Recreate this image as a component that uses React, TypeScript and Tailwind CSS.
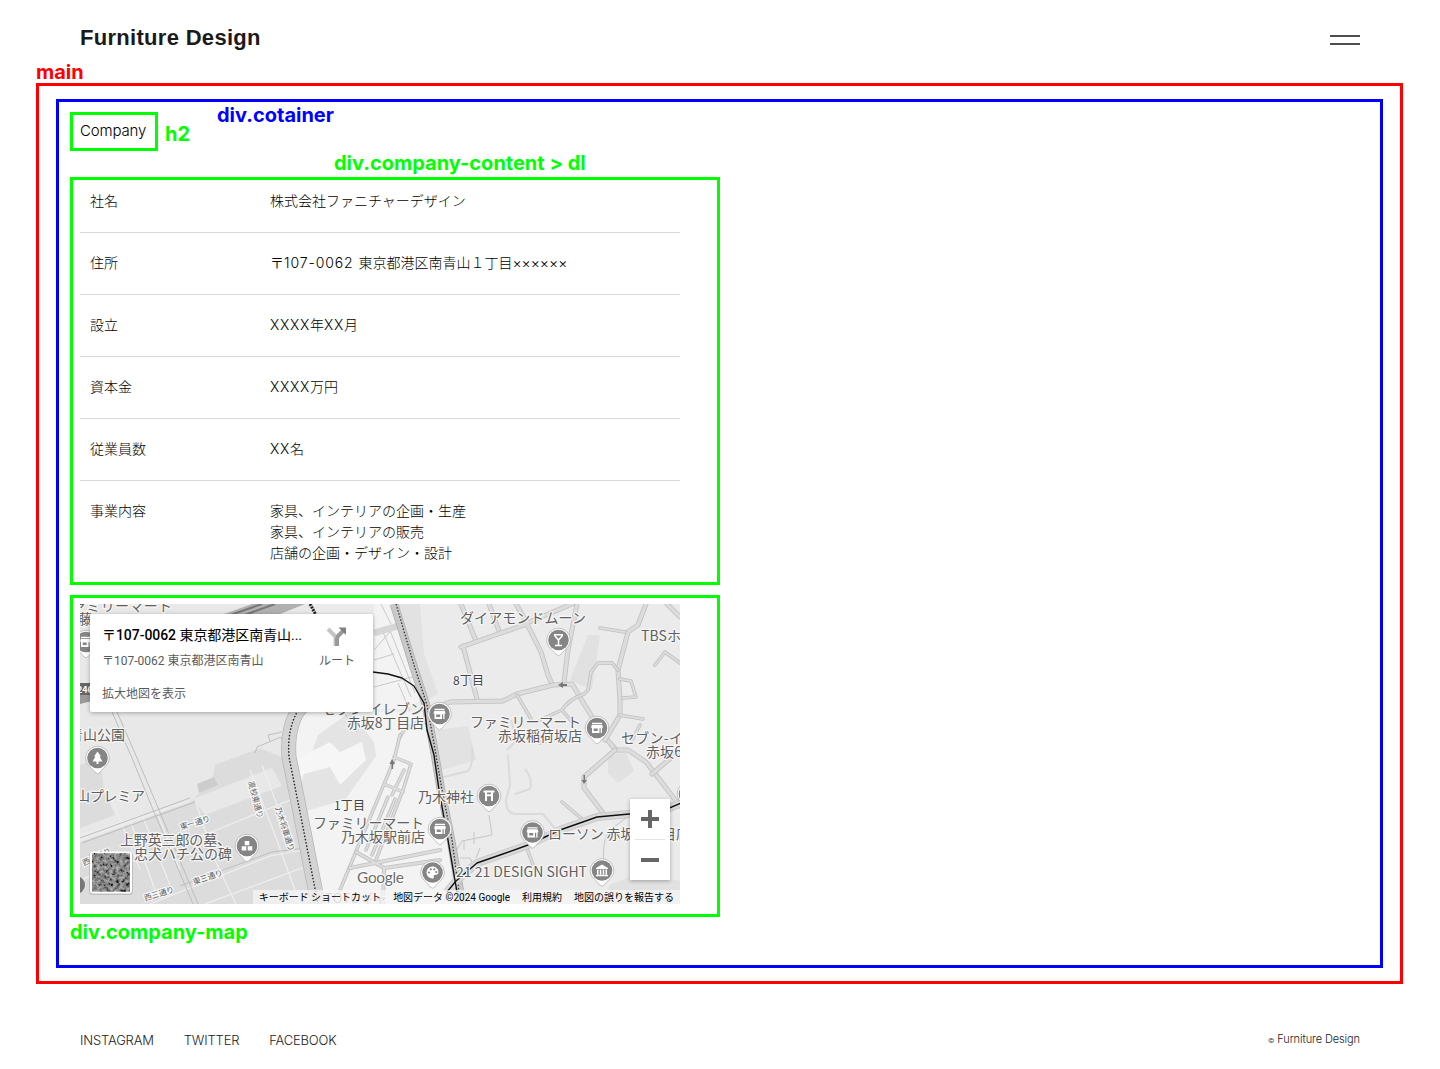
import React from "react";

const JP = "font-['Noto_Sans_CJK_JP',sans-serif]";
const BODY = "font-[Inter,'Noto_Sans_CJK_JP',sans-serif]";

const rows: { term: string; lines: React.ReactNode[] }[] = [
  { term: "社名", lines: ["株式会社ファニチャーデザイン"] },
  { term: "住所", lines: [<>〒<span className="tracking-[0.9px]">107-0062 </span>東京都港区南青山１丁目××××××</>] },
  { term: "設立", lines: [<><span className="tracking-[0.75px]">XXXX</span>年<span className="tracking-[0.75px]">XX</span>月</>] },
  { term: "資本金", lines: [<><span className="tracking-[0.75px]">XXXX</span>万円</>] },
  { term: "従業員数", lines: [<><span className="tracking-[0.75px]">XX</span>名</>] },
  { term: "事業内容", lines: ["家具、インテリアの企画・生産", "家具、インテリアの販売", "店舗の企画・デザイン・設計"] },
];

const minorRoads = [
  "M461 604 L476 641 M489 604 L499 631",
  "M461 647 L527 624 L541 652 L548 675 L552 684 M463 646 L477 699 M516 604 L527 623 L572 604 M577 604 L568 650 L564 682",
  "M433 708 L450 702 L503 701 L517 694 L553 685 L572 684 L603 735 L616 750 L628 750 L646 762 L680 806",
  "M646 604 L638 625 L628 632 L618 670 L620 700 L620 715 L605 740",
  "M615 750 L584 777 L584 788 L603 813 M652 774 L680 750 M667 604 L680 617",
];

const lanes = [
  "M517 695 L531 719 M540 743 L548 740 M540 720 L562 710 L572 722 M562 710 Q568 700 584 694 L588 690 L591 672 L598 663 L612 663 L618 670",
  "M600 628 L625 632 M620 679 L631 681 L636 697 L623 698 M619 715 L643 719 M640 725 L632 740 M655 665 L665 652 L680 663",
  "M562 802 L582 819 M526 846 L535 870",
];

const streets = [
  "M112 800 L140 870 M130 820 L155 890 M143 817 L170 885 M158 815 L180 870",
  "M196 803 L215 860 L236 904 M250 770 L275 835 L300 904 M262 765 L290 840",
  "M80 880 L180 845 L290 800 M150 904 L270 856 L303 850 M205 904 L310 865",
];

const darkRail = "M373 672 L388 674 L402 678 L414 686 L424 703 L427 730 L434 755 L439 790 L448 840 L457 892";
const eastRail = "M447 892 L456 881 L477 863 L500 855 L528 845 L560 830 L597 817 L640 813 L667 809 L681 803";
const westCurve = "M320 690 Q301 705 296 714 Q287 732 289 757 L300 812 L310 863 L318 904";
const avenue = "M393 604 L412 665 L425 705 L434 755 L440 790 L450 840 L461 904";

function Road({ d, w = 4 }: { d: string; w?: number }) {
  return (
    <g fill="none" strokeLinejoin="round" strokeLinecap="round">
      <path d={d} stroke="#c0c0c0" strokeWidth={w} />
      <path d={d} stroke="#dcdcdc" strokeWidth={w - 1.6} />
    </g>
  );
}

function Label({ x, y, w, size = 14, rotate = 0, fill = "#606060", children }: {
  x: number; y: number; w: number; size?: number; rotate?: number; fill?: string; children: string;
}) {
  return (
    <text
      x={x}
      y={y}
      textLength={w}
      fontSize={size}
      fill={fill}
      stroke="#f6f6f6"
      strokeWidth={2.5}
      strokeLinejoin="round"
      paintOrder="stroke"
      transform={rotate ? `rotate(${rotate} ${x} ${y})` : undefined}
    >
      {children}
    </text>
  );
}

type Kind = "shop" | "bar" | "tree" | "shrine" | "museum" | "palette" | "blocks" | "none";

function Glyph({ kind }: { kind: Kind }) {
  if (kind === "shop")
    return (
      <g>
        <path d="M-5-5.300H5v1.300H-5zM-5.200-3.200H5.200L6-.3H5V5H-5V-.3h-1z" fill="#fff" />
        <path d="M-3.300.5h4v2.500h-4zM2.500.3h1.200V5H2.500z" fill="#858585" />
      </g>
    );
  if (kind === "bar") return <path d="M-4.500-5.300h9M-4-4.500 0 0 4-4.500M0 0v5M-3.500 5.500h7" fill="none" stroke="#fff" strokeWidth={1.5} />;
  if (kind === "tree") return <path d="M0-6.500 3.500-1.500H2L5 3.500H1V6h-2V3.500h-4L-2-1.500h-1.500z" fill="#fff" />;
  if (kind === "shrine") return <path d="M-5.500-4.500h11M-4-.8h8M-3-4v9M3-4v9" fill="none" stroke="#fff" strokeWidth={2} />;
  if (kind === "museum") return <path d="M-6-2.500 0-6 6-2.500v1H-6zM-5-1h1.500v5H-5zM-2.200-1h1.500v5h-1.500zM.7-1h1.500v5H.7zM3.500-1H5v5H3.500zM-6 4.200H6v1.500H-6z" fill="#fff" />;
  if (kind === "palette")
    return (
      <g>
        <path d="M0-6a6 6 0 1 0 0 12c2 0 1-2 1.300-3 .3-1.200 4.700.2 4.700-3.500C6-3.500 3.500-6 0-6z" fill="#fff" />
        <g fill="#858585">
          <circle cx={-3.5} cy={0} r={1.1} />
          <circle cx={-1.7} cy={-3.2} r={1.1} />
          <circle cx={1.8} cy={-3.2} r={1.1} />
          <circle cx={3.8} cy={-0.5} r={1.1} />
        </g>
      </g>
    );
  if (kind === "blocks") return <path d="M-2.300-5h4.600v4.300h-4.600zM-5.300.3h4.600v4.300h-4.600zM.7.3h4.600v4.300H.7z" fill="#fff" />;
  return null;
}

function Pin({ x, y, kind }: { x: number; y: number; kind: Kind }) {
  return (
    <g transform={`translate(${x} ${y})`}>
      <path
        d="M0-11.800a11.800 11.800 0 0 1 11.800 11.800c0 6.500-5.500 9-9.300 14.300q-2.500 3-5 0C-6.300 9-11.800 6.500-11.800 0A11.800 11.800 0 0 1 0-11.800z"
        fill="#fff"
        stroke="#aaa"
        strokeOpacity={0.7}
        strokeWidth={1}
      />
      <circle r={10.3} fill="#858585" />
      <Glyph kind={kind} />
    </g>
  );
}

function MapDrawing() {
  return (
    <svg viewBox="80 604 600 300" className={`block h-[300px] w-[600px] font-normal ${JP}`}>
      <defs>
        <filter id="aerial" x="0" y="0" width="100%" height="100%">
          <feTurbulence type="fractalNoise" baseFrequency="0.3" numOctaves={4} seed={7} />
          <feColorMatrix values="1.6 0 0 0 -.4  1.6 0 0 0 -.4  1.6 0 0 0 -.4  0 0 0 0 1" />
        </filter>
      </defs>
      <rect x={80} y={604} width={600} height={300} fill="#ebebeb" />
      <path d="M80 604h230l50 110-60 30-10 25-210 65z" fill="#e8e8e8" />
      <path d="M80 765 L100 757 L104 790 L115 815 L80 828z" fill="#dcdcdc" />
      <path d="M80 842 L190 802 L212 782 L215 765 L260 748 L288 760 L302 812 L318 904 H80z" fill="#dcdcdc" />
      <path d="M193 799 L272 768 L282 786 L205 815z" fill="#e8e8e8" />
      <path d="M197 784 L214 777 L218 785 L199 793z" fill="#cdcdcd" />
      <path d="M300 712h125l12 60 18 132H318l-18-100-6-50z M374 604h22l28 95-20 10h-30z" fill="#f3f3f3" />
      <path d="M302 780 L318 735 L350 712 L374 742 L376 756 L345 800 L302 812z" fill="#e4e4e4" />
      <path d="M298 758 L330 742 L340 752 L362 742 L366 760 L340 785 L330 767 L300 775z" fill="#f6f6f6" />
      <path d="M396 604h24l4 50 14 40-14 8z M436 730l32-4 8 34-34 10z" fill="#e2e2e2" />
      <path d="M588 635l12 0-8 55-22-10z M608 755l18-2 8 18-16 12-10-10z M610 885l30-12 40 8v24H600z" fill="#e1e1e1" />

      <path d="M213 618 L252 604 H305 L270 618z" fill="#b0b0b0" />
      <path d="M222 618 L262 604 M236 618 L275 604" stroke="#777" strokeWidth={2} />
      <path d="M80 687 L96 680 V700 L80 704z" fill="#9a9a9a" />
      <path
        d="M312 604l4 12M374 634l22-7M374 650l22-25M383 632l28 65M389 628l26 65M374 687l38-10M374 660l20-6M381 604l10 20M398 683l12 28"
        fill="none"
        stroke="#c9c9c9"
      />
      <path d="M374 633l24-7" stroke="#d6d6d6" strokeWidth={7} />

      <g fill="none" strokeLinejoin="round">
        {streets.map((d) => (
          <path key={d} d={d} stroke="#efefef" strokeWidth={1.2} />
        ))}
        <path d="M80 838 L190 798 M82 843 L195 802 M112 712 L132 758 L154 812 L193 904 M117 712 L137 758 L159 810 L198 904" stroke="#bdbdbd" />
        <path d="M180 886 L272 852 L306 848 M255 753 L257 747 L281 737 L284 748 M270 741 L268 735 L282 732" stroke="#c0c0c0" />
      </g>

      {minorRoads.map((d) => (
        <Road key={d} d={d} w={5} />
      ))}
      {lanes.map((d) => (
        <Road key={d} d={d} w={3.5} />
      ))}
      <g fill="none" stroke="#dadada" strokeWidth={2}>
        <path d="M508 755l2 30-4 15q0 15 12 14h25l15 18 M525 769q8 10 5 20l-15 5 M440 778l28-7q6-8 4-24 M511 720l6 20-10 10" />
      </g>
      <g fill="none" stroke="#c6c6c6" strokeWidth={1}>
        <path d="M489 815l3 20-30 6-6 10M464 840v10M474 832v12M630 815l-20 15q-10 10-5 50M460 858l10 0 3 6M480 848l-4 10" />
        <path d="M412 727l18-5 M345 714l12 18" />
      </g>
      <Road d="M400 737 L404 730 L430 715" w={3.5} />
      <Road d="M400 735 L394 760 L340 890 M394 757 L411 764 L403 790 L376 860 M384 784 L403 792 M404 770 L392 795 M388 797 L366 850 M395 799 L372 855" w={3.5} />
      <Road d="M356 852 L384 868 L440 860 M384 868 L383 904 M350 868 L440 850" w={4} />

      <g fill="none" strokeLinejoin="round">
        <path d={westCurve} stroke="#b6b6b6" strokeWidth={15} />
        <path d={westCurve} stroke="#d3d3d3" strokeWidth={13.5} />
        <path d={westCurve} stroke="#222" strokeWidth={1.4} strokeDasharray="1.5 1.8" />
        <path d={avenue} stroke="#adadad" strokeWidth={8.5} transform="translate(1 0)" />
        <path d={avenue} stroke="#c8c8c8" strokeWidth={7} transform="translate(1 0)" />
        <path d="M396 604 L414 665 L427 705 L436 755 L442 790 L452 840 L459 892" stroke="#333" strokeWidth={1.3} strokeDasharray="1.500 1.700" />
        <path d={eastRail} stroke="#c3c3c3" strokeWidth={8} />
        <path d={eastRail} stroke="#d9d9d9" strokeWidth={6.5} />
        <path d={darkRail} stroke="#111" strokeWidth={1.4} />
        <path d={eastRail} stroke="#111" strokeWidth={1.4} />
      </g>
      <path d="M558 685l5-3v2h4v2h-4v2zM584 784l-2.500-4h2v-5h1.500v5h2zM392 759l-2.500 5h2v5h1.500v-5h2z" fill="#777" />
      <path d="M310 604l6 11" stroke="#222" strokeWidth={3} strokeDasharray="2 1" />

      <Label x={72} y={611} w={100}>ァミリーマート</Label>
      <Label x={78} y={624} w={14}>藤</Label>
      <Pin x={86} y={642} kind="shop" />
      <rect x={74} y={683} width={24} height={12} rx={5} fill="#666" />
      <text x={77} y={693} fontSize={9} fontWeight={700} fill="#fff">246</text>
      <Label x={460} y={622.5} w={126}>ダイアモンドムーン</Label>
      <Label x={641} y={641} w={40}>TBSホ</Label>
      <Label x={453} y={685} w={31} size={12} fill="#444">8丁目</Label>
      <Label x={322} y={714} w={102}>セブン-イレブン</Label>
      <Label x={347} y={728} w={77}>赤坂8丁目店</Label>
      <Label x={470} y={727} w={111}>ファミリーマート</Label>
      <Label x={498} y={741} w={84}>赤坂稲荷坂店</Label>
      <Label x={621} y={742.5} w={62}>セブン-イ</Label>
      <Label x={646} y={756.5} w={36}>赤坂6</Label>
      <Label x={69} y={740} w={56}>青山公園</Label>
      <Label x={76} y={801} w={69}>山プレミア</Label>
      <Label x={334} y={810} w={31} size={12} fill="#444">1丁目</Label>
      <Label x={313} y={828} w={111}>ファミリーマート</Label>
      <Label x={341} y={842} w={84}>乃木坂駅前店</Label>
      <Label x={418} y={802} w={56}>乃木神社</Label>
      <Label x={548} y={839} w={142}>ローソン 赤坂六丁目店</Label>
      <Label x={456} y={877} w={131}>21 21 DESIGN SIGHT</Label>
      <Label x={120} y={845} w={111}>上野英三郎の墓、</Label>
      <Label x={134} y={859} w={98}>忠犬ハチ公の碑</Label>
      <Label x={181} y={830} w={31} size={8} rotate={-17}>東一通り</Label>
      <Label x={84} y={866} w={31} size={8} rotate={-25}>西二通り</Label>
      <Label x={145} y={901} w={31} size={8} rotate={-17}>西三通り</Label>
      <Label x={194} y={885} w={31} size={8} rotate={-19}>東三通り</Label>
      <Label x={248} y={782} w={38} size={8} rotate={75}>高校東通り</Label>
      <Label x={275} y={808} w={46} size={8} rotate={72}>乃木将軍通り</Label>
      <Label x={325} y={903} w={62} size={13} fill="#8a8a8a">TOTOギャ</Label>

      <Pin x={558.5} y={640} kind="bar" />
      <Pin x={439.5} y={714} kind="shop" />
      <Pin x={597} y={728} kind="shop" />
      <Pin x={97.5} y={758} kind="tree" />
      <Pin x={489} y={796} kind="shrine" />
      <Pin x={440} y={829} kind="shop" />
      <Pin x={532.5} y={832.5} kind="shop" />
      <Pin x={432.5} y={872.5} kind="palette" />
      <Pin x={602} y={870.5} kind="museum" />
      <Pin x={247} y={846} kind="blocks" />
      <Pin x={689} y={794} kind="none" />
      <circle cx={76} cy={885} r={9} fill="#777" />

      <text x={357} y={883} textLength={47} fontSize={15.5} fill="#6b6b6b" stroke="#fff" strokeWidth={2} paintOrder="stroke" className="font-[Lato]">Google</text>
      <rect x={89} y={852} width={44} height={43} rx={4} fill="#888" opacity={0.35} />
      <rect x={90} y={851.5} width={42} height={42} rx={3} fill="#fff" />
      <rect x={92} y={853.5} width={38} height={38} rx={1} filter="url(#aerial)" />
      <rect x={92} y={853.5} width={38} height={38} fill="#444" opacity={0.35} />
    </svg>
  );
}

function CompanyMap() {
  return (
    <div className="relative h-[300px] w-[600px] overflow-hidden">
      <MapDrawing />
      <div className="absolute left-[10px] top-[10px] flex h-[98px] w-[283px] justify-between rounded-[2px] bg-white pl-3 shadow-[0_1px_4px_rgba(0,0,0,0.3)]">
        <div className="flex flex-col whitespace-nowrap font-[Roboto,'Noto_Sans_CJK_JP',sans-serif] text-[12px] text-[#5b5b5b]">
          <p className="mt-[11px] h-5 text-[14px] font-medium leading-5 tracking-[-0.05px] text-black"><span className="font-normal">〒</span>107-0062 <span className="font-normal">東京都港区南青山...</span></p>
          <p className="mt-[8px] h-4 font-normal leading-4">〒107-0062 東京都港区南青山</p>
          <p className="mt-[17px] h-4 font-normal leading-4">拡大地図を表示</p>
        </div>
        <div className="mr-[18px] flex w-9 flex-col items-center pt-3">
          <svg viewBox="0 0 22 22" className="size-[22px]">
            <path d="M2 3l7.500 7.500V20" fill="none" stroke="#c4c4c4" strokeWidth={4} />
            <path d="M11 20v-7q0-2 1.500-3.500L17 5" fill="none" stroke="#999" strokeWidth={4} />
            <path d="M12.500 1.500H20V9z" fill="#808080" />
          </svg>
          <span className={`mt-1 whitespace-nowrap text-[12px] font-normal leading-4 text-[#5b5b5b] ${JP}`}>ルート</span>
        </div>
      </div>
      <div className="absolute left-[550px] top-[195px] flex h-[81px] w-10 flex-col items-center bg-white shadow-[0_1px_4px_rgba(0,0,0,0.3)]">
        <svg viewBox="0 0 18 18" className="my-[11px] size-[18px]"><path d="M0 9h18M9 0v18" stroke="#666" strokeWidth={4} /></svg>
        <div className="h-px w-[30px] shrink-0 bg-[#e3e3e3]" />
        <svg viewBox="0 0 18 18" className="my-[11px] size-[18px]"><path d="M0 9h18" stroke="#666" strokeWidth={4} /></svg>
      </div>
      <div className="absolute bottom-0 right-0 flex h-[14px] items-center gap-3 whitespace-nowrap bg-[#f5f5f5]/75 px-[6px] pt-[2px] font-[Roboto,'Noto_Sans_CJK_JP',sans-serif] text-[10px] font-normal leading-[14px] text-black">
        <span>キーボード ショートカット</span>
        <span>地図データ ©2024 Google</span>
        <span>利用規約</span>
        <span>地図の誤りを報告する</span>
      </div>
    </div>
  );
}

function Tag({ className, children }: { className: string; children: string }) {
  return <span className={`absolute whitespace-nowrap font-[Inter,sans-serif] text-[20px] font-bold leading-6 ${className}`}>{children}</span>;
}

export default function App() {
  return (
    <div className={`flex h-[1069px] w-[1440px] flex-col overflow-hidden bg-white text-[14px] font-light text-black ${BODY}`}>
      <header className="flex h-[83px] shrink-0 justify-between px-20">
        <h1 className="pt-[25px] font-['Liberation_Sans',sans-serif] text-[22px] font-bold leading-[26px] tracking-[0.3px] text-[#1a1a1a]">Furniture Design</h1>
        <div className="flex w-[30px] flex-col gap-[6px] pt-[35px]">
          <div className="h-[2px] bg-[#4d4d4d]" />
          <div className="h-[2px] bg-[#4d4d4d]" />
        </div>
      </header>

      <main className="relative mx-9 mr-[37px] h-[901px] shrink-0 border-[3px] border-[#ff0000] px-[17px] py-[13px]">
        <Tag className="-left-[3px] -top-[26px] text-[#ff0000]">main</Tag>
        <div className="relative h-[869px] border-[3px] border-[#0000ff] px-[11px] pt-[10px]">
          <Tag className="left-[158px] top-[1px] text-[#0000ff]">div.cotainer</Tag>
          <div className="relative h-[39px] w-[88px] border-[3px] border-[#00ff00] pl-[7px] pt-[5px]">
            <h2 className="text-[15px] leading-[22px] tracking-[-0.15px]">Company</h2>
            <Tag className="left-[92px] top-[7px] text-[#00ff00]">h2</Tag>
          </div>

          <div className="relative mt-[26px] h-[408px] w-[650px] border-[3px] border-[#00ff00] pl-[7px]">
            <Tag className="left-[261px] -top-[29px] text-[#00ff00]">div.company-content &gt; dl</Tag>
            <dl className="flex w-[600px] flex-col">
              {rows.map((r, i) => (
                <div
                  key={r.term}
                  className={`flex pl-[10px] leading-[21px] ${i === 0 ? "h-[53px] pt-[10px]" : "pt-[19px]"} ${i > 0 && i < 5 ? "h-[62px]" : ""} ${i < 5 ? "border-b border-[#d9d9d9]" : ""}`}
                >
                  <dt className="w-[180px]">{r.term}</dt>
                  <dd className="whitespace-nowrap">
                    {r.lines.map((l, n) => (
                      <p key={n}>{l}</p>
                    ))}
                  </dd>
                </div>
              ))}
            </dl>
          </div>

          <div className="relative mt-[10px] h-[322px] w-[650px] border-[3px] border-[#00ff00] pl-[7px] pt-[6px]">
            <CompanyMap />
            <Tag className="-left-[3px] top-[322px] text-[#00ff00]">div.company-map</Tag>
          </div>
        </div>
      </main>

      <footer className="flex justify-between px-20 pt-[46px]">
        <ul className="flex gap-[30px] text-[13px] leading-5 tracking-[-0.18px] text-[#222]">
          <li>INSTAGRAM</li>
          <li>TWITTER</li>
          <li>FACEBOOK</li>
        </ul>
        <p className="text-[11px] leading-[18px] tracking-[-0.1px] text-[#222]"><span className="text-[7px]">©</span> Furniture Design</p>
      </footer>
    </div>
  );
}
